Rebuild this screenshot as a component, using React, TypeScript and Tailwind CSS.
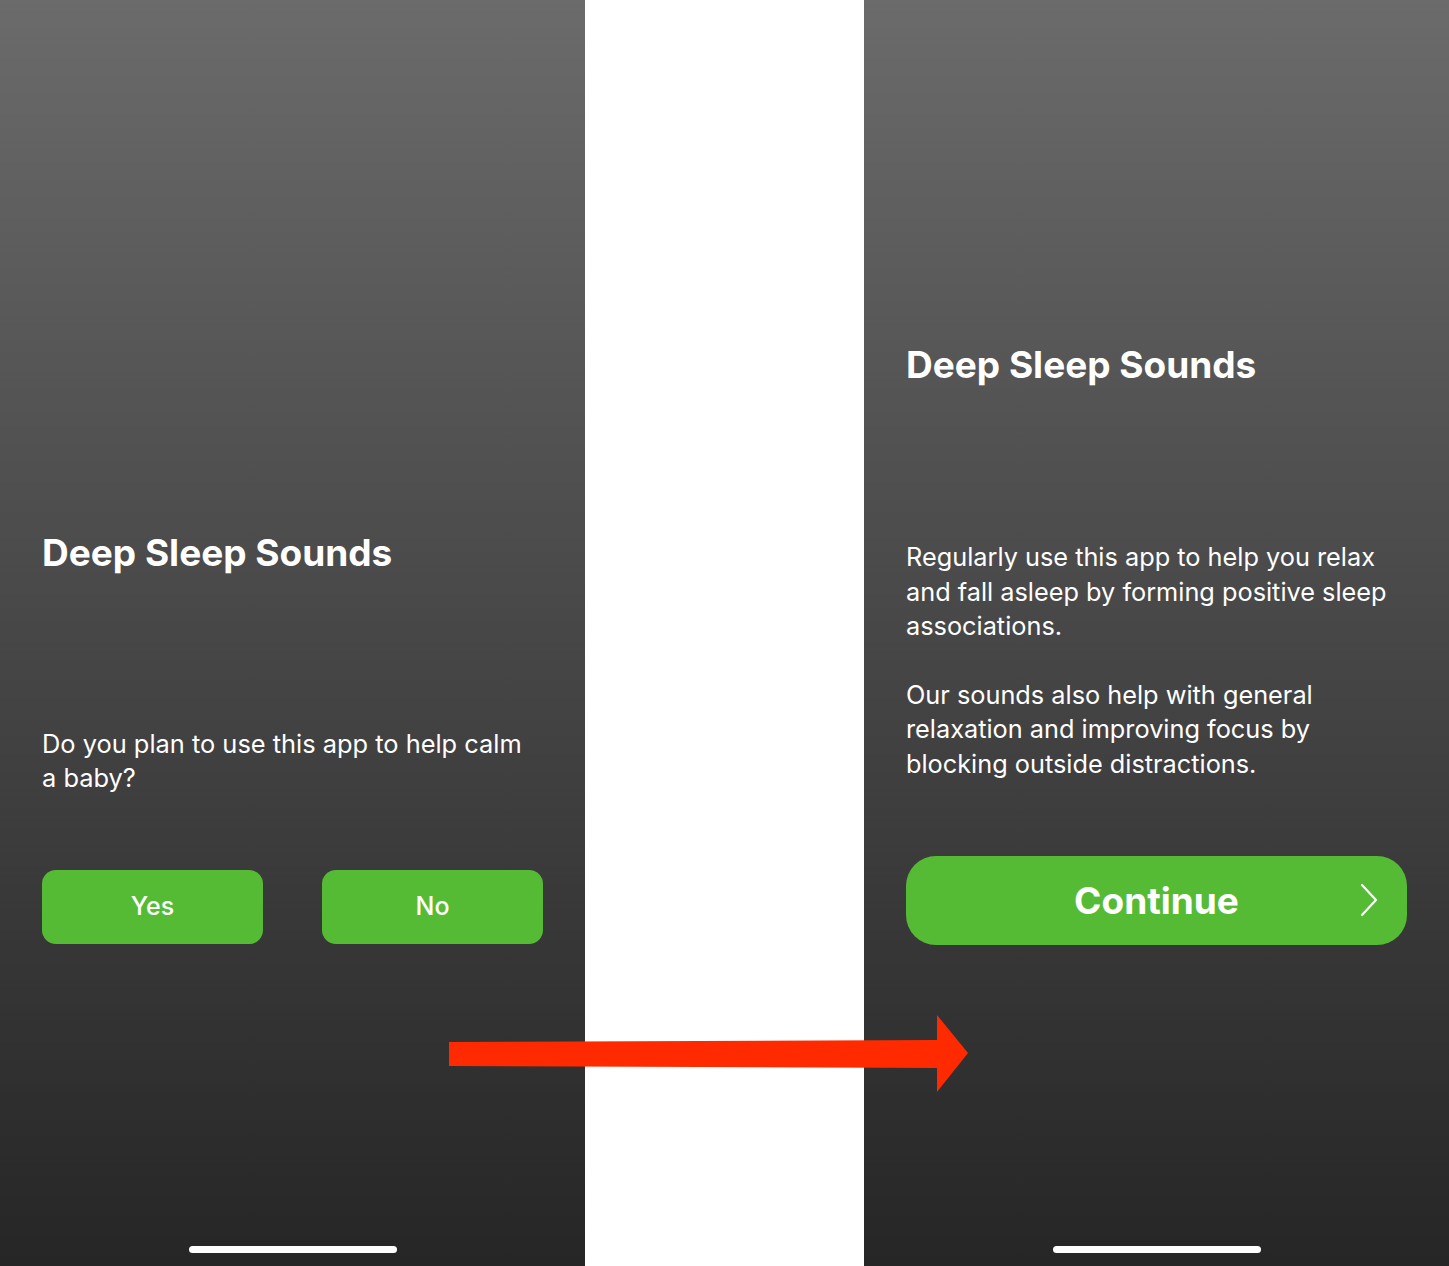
import React from "react";

function HomeBar() {
  return (
    <div className="mt-auto mb-[13px] flex justify-center">
      <div className="h-[7px] w-[208px] rounded-full bg-white" />
    </div>
  );
}

function Chevron() {
  return (
    <svg className="h-[34px] w-[20px]" viewBox="0 0 20 34" fill="none" stroke="white" strokeWidth={2.2} strokeLinecap="round" strokeLinejoin="round">
      <path d="M3 2 L17 17 L3 32" />
    </svg>
  );
}

export default function App() {
  const font = { fontFamily: "Inter, 'Noto Sans', sans-serif" };

  return (
    <div className="relative flex h-[1266px] w-[1449px] overflow-hidden bg-white" style={font}>
      {/* left screen */}
      <div className="flex h-full w-[585px] flex-col bg-gradient-to-b from-[#6b6b6b] to-[#262626] px-[42px] text-white">
        <h1 className="mt-[531px] text-[37px] font-bold leading-[44px]">Deep Sleep Sounds</h1>
        <p className="mt-[152px] text-[25.4px] leading-[34px]">
          Do you plan to use this app to help calm a baby?
        </p>
        <div className="mt-[75px] flex justify-between">
          <button className="h-[74px] w-[221px] rounded-[14px] bg-[#55bb35] text-[25px] font-medium text-white">Yes</button>
          <button className="h-[74px] w-[221px] rounded-[14px] bg-[#55bb35] text-[25px] font-medium text-white">No</button>
        </div>
        <HomeBar />
      </div>

      {/* gap */}
      <div className="h-full w-[279px] bg-white" />

      {/* right screen */}
      <div className="flex h-full w-[585px] flex-col bg-gradient-to-b from-[#6b6b6b] to-[#262626] px-[42px] text-white">
        <h1 className="mt-[343px] text-[37px] font-bold leading-[44px]">Deep Sleep Sounds</h1>
        <p className="mt-[153px] text-[25.3px] leading-[34.5px]">
          Regularly use this app to help you relax and fall asleep by forming positive sleep associations.
        </p>
        <p className="mt-[34px] text-[25.3px] leading-[34.5px]">
          Our sounds also help with general relaxation and improving focus by blocking outside distractions.
        </p>
        <button className="relative mt-[75px] flex h-[89px] w-[501px] items-center justify-center rounded-[30px] bg-[#55bb35]">
          <span className="text-[37px] font-bold text-white">Continue</span>
          <span className="absolute right-[28px] top-[27px]">
            <Chevron />
          </span>
        </button>
        <HomeBar />
      </div>

      {/* red arrow overlay */}
      <svg className="absolute left-0 top-0 h-[1266px] w-[1449px]" viewBox="0 0 1449 1266">
        <polygon points="449,1042 937,1040 937,1015 968,1053 937,1092 937,1068 449,1066" fill="#ff2a00" />
      </svg>
    </div>
  );
}
